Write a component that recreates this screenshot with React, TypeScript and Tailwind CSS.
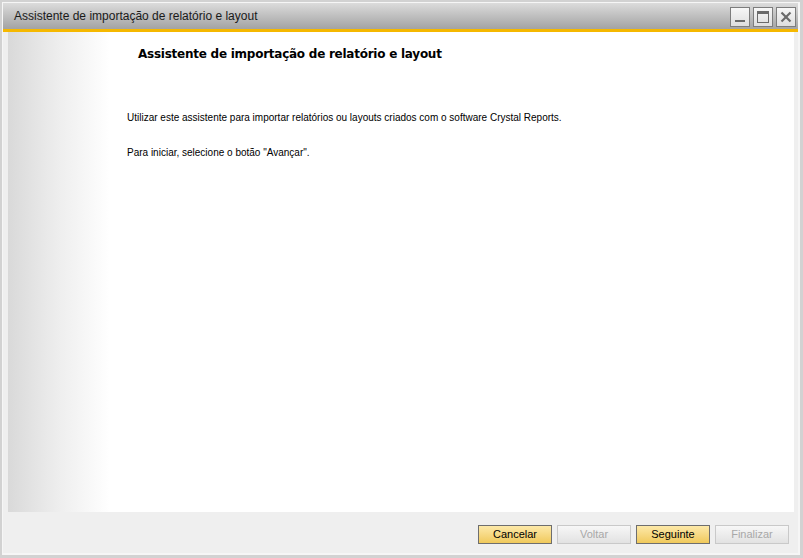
import React from 'react';

const font = { fontFamily: '"Liberation Sans", Arial, sans-serif' };

const WinButton: React.FC<{ kind: 'min' | 'max' | 'close' }> = ({ kind }) => (
  <div className="w-[20px] h-[20px] border border-[#7d7d7d] bg-gradient-to-b from-[#f7f7f7] to-[#dedede] flex items-center justify-center">
    <svg width="14" height="14" viewBox="0 0 14 14">
      {kind === 'min' && <rect x="2" y="10" width="10" height="2" fill="#6a6a6a" />}
      {kind === 'max' && (
        <g fill="none" stroke="#6a6a6a">
          <rect x="1.5" y="1.5" width="11" height="11" />
          <line x1="1.5" y1="3" x2="12.5" y2="3" strokeWidth="2" />
        </g>
      )}
      {kind === 'close' && (
        <g stroke="#6a6a6a" strokeWidth="2.2">
          <line x1="2.5" y1="2.5" x2="11.5" y2="11.5" />
          <line x1="11.5" y1="2.5" x2="2.5" y2="11.5" />
        </g>
      )}
    </svg>
  </div>
);

const FooterButton: React.FC<{ label: string; active?: boolean }> = ({ label, active }) => (
  <button
    className={
      active
        ? 'w-[74px] h-[19px] border border-[#6e6e6e] bg-gradient-to-b from-[#fde9a8] to-[#f0c95a] text-[11px] text-black'
        : 'w-[74px] h-[19px] border border-[#c9c9c9] bg-gradient-to-b from-[#f7f7f7] to-[#e2e2e2] text-[11px] text-[#a8a8a8]'
    }
    style={font}
  >
    {label}
  </button>
);

export default function App() {
  return (
    <div className="w-[803px] h-[558px] bg-[#d2d2d2] pl-[2px] pt-[2px] pr-[3px] pb-[3px]" style={font}>
      <div className="w-full h-full bg-[#f6f6f6] pl-[1px] pt-[1px] pr-[2px] pb-[2px] flex flex-col">
        {/* Title bar */}
        <div className="h-[26px] bg-gradient-to-b from-[#dcdcdc] to-[#a3a3a3] flex items-center justify-between pl-[11px] pr-[2px]">
          <span className="text-[12px] text-[#1a1a1a]">Assistente de importação de relatório e layout</span>
          <div className="flex gap-[3px] pt-[2px]">
            <WinButton kind="min" />
            <WinButton kind="max" />
            <WinButton kind="close" />
          </div>
        </div>
        <div className="h-[3px] bg-[#f5b800]" />

        {/* Body */}
        <div className="flex-1 flex flex-col bg-[#efefef] pl-[5px] pr-[4px]">
          <div className="flex-1 flex bg-white">
            <div className="w-[102px] bg-gradient-to-r from-[#d9d9d9] via-[#eeeeee] to-white" />
            <div className="flex-1 pl-[17px]">
              <h1
                className="text-[12px] font-bold text-black ml-[11px] mt-[13px] tracking-[-0.25px]"
                style={{ fontFamily: '"DejaVu Sans", Verdana, sans-serif' }}
              >
                Assistente de importação de relatório e layout
              </h1>
              <p className="text-[10px] text-black mt-[47px]">
                Utilizar este assistente para importar relatórios ou layouts criados com o software Crystal Reports.
              </p>
              <p className="text-[10px] text-black mt-[20px]">Para iniciar, selecione o botão "Avançar".</p>
            </div>
          </div>
          <div className="h-[41px] flex justify-end items-start gap-[5px] pt-[13px] pr-[5px]">
            <FooterButton label="Cancelar" active />
            <FooterButton label="Voltar" />
            <FooterButton label="Seguinte" active />
            <FooterButton label="Finalizar" />
          </div>
        </div>
      </div>
    </div>
  );
}
